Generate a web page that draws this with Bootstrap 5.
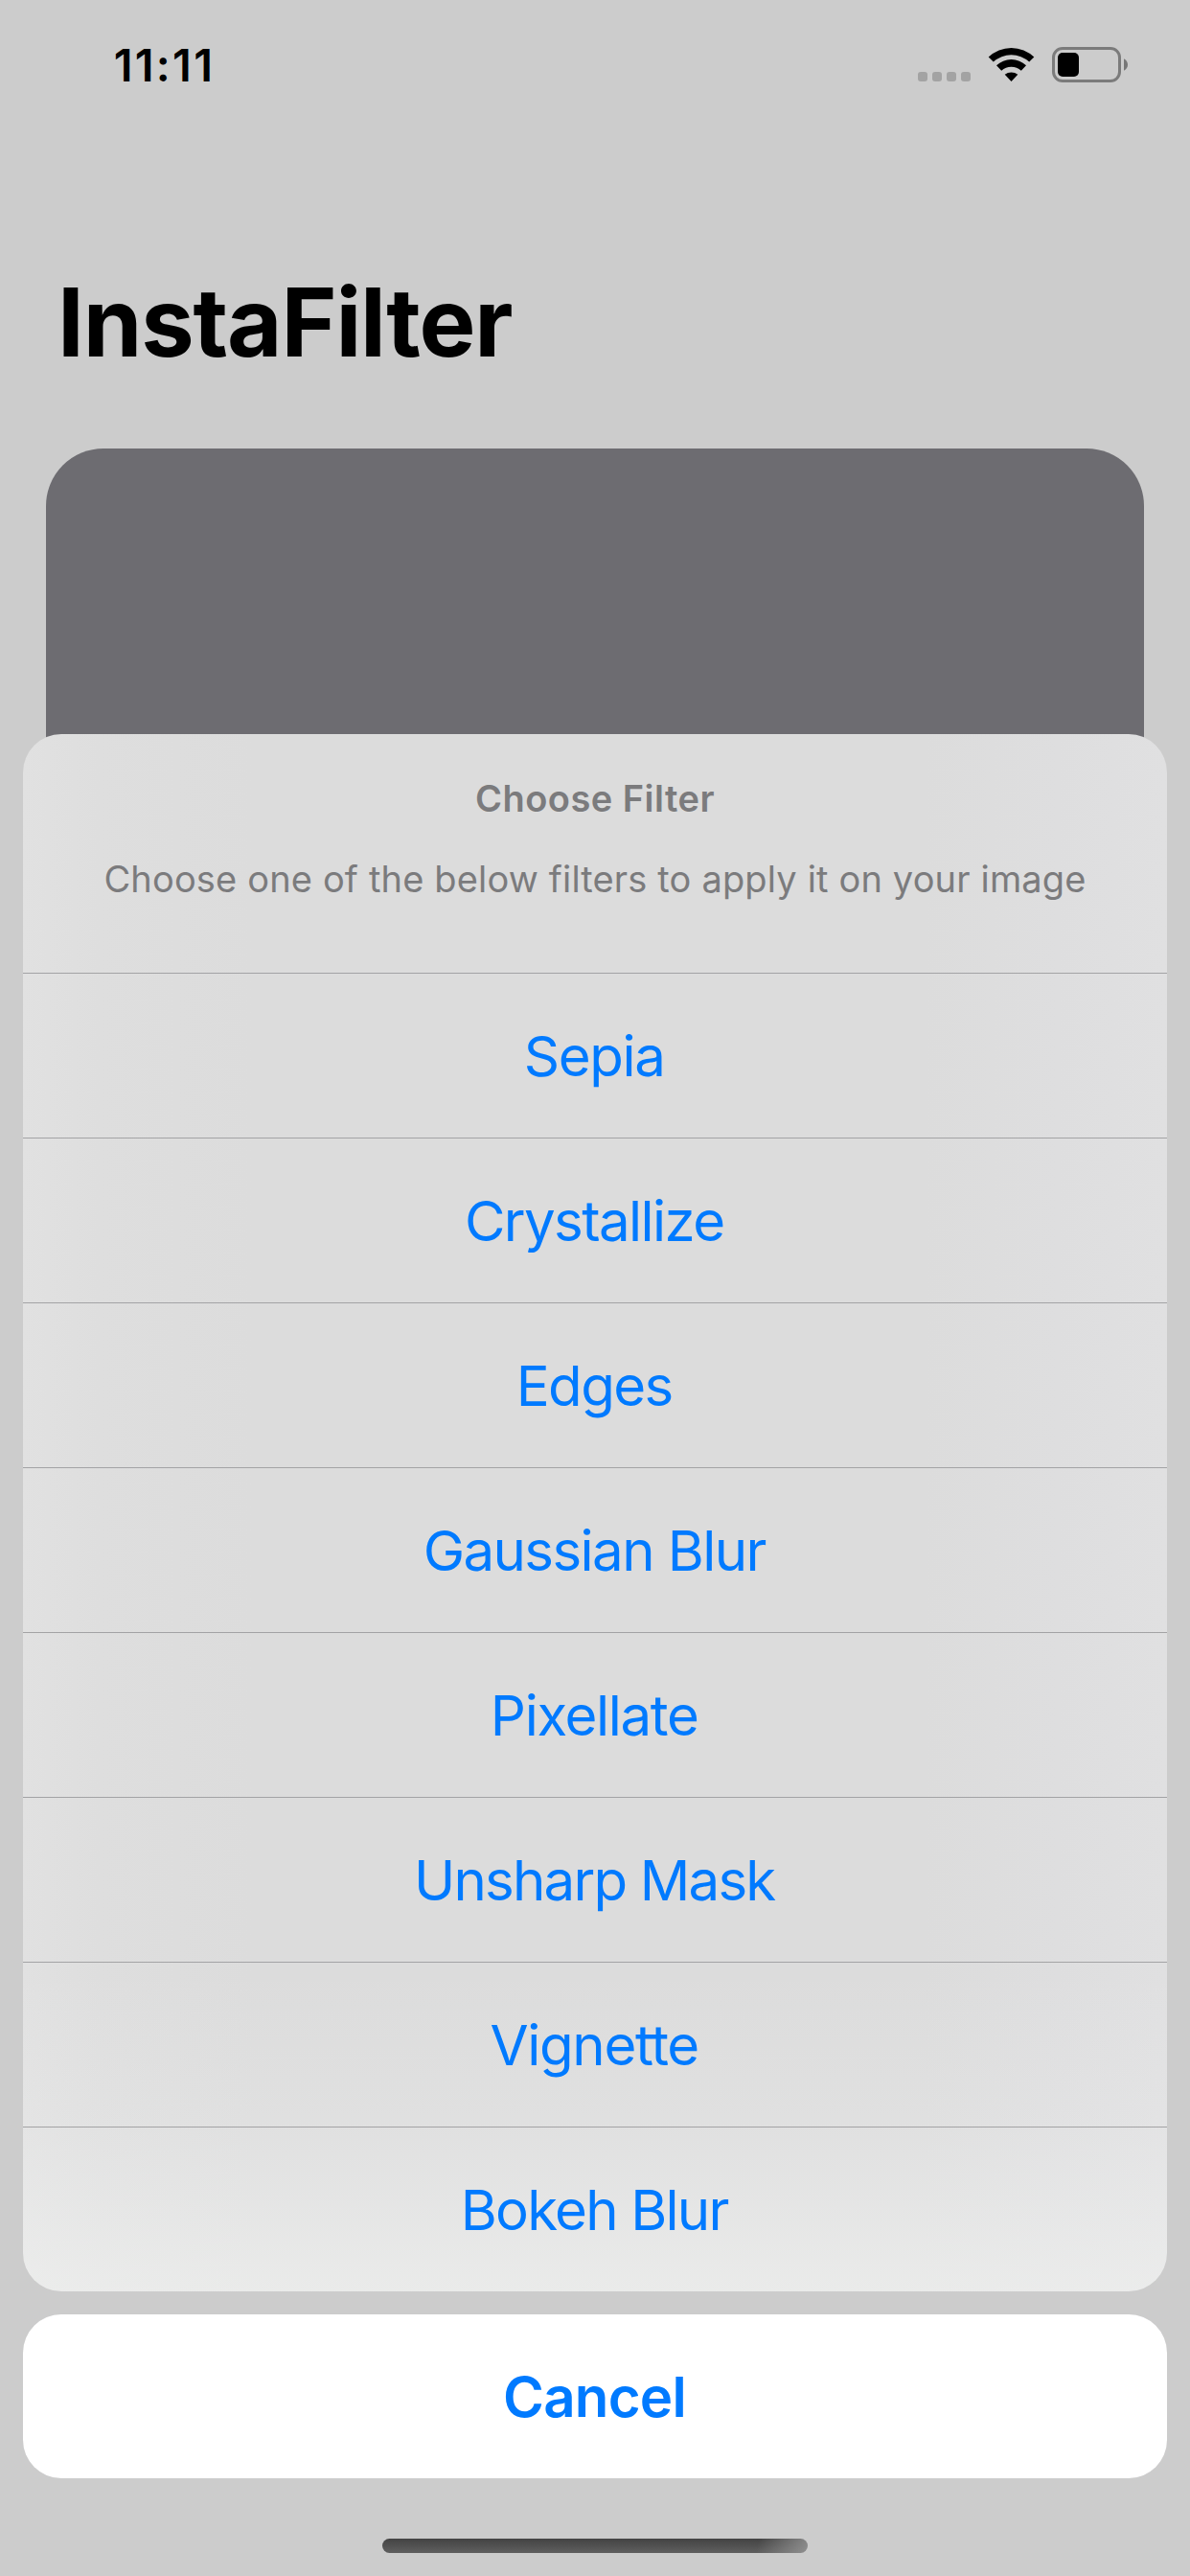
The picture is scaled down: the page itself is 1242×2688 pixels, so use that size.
<!DOCTYPE html>
<html lang="en">
<head>
<meta charset="utf-8">
<meta name="viewport" content="width=device-width, initial-scale=1">
<title>InstaFilter</title>
<link href="https://cdn.jsdelivr.net/npm/bootstrap@5.3.0/dist/css/bootstrap.min.css" rel="stylesheet">
<style>
  body { width: 1242px; height: 2688px; background: #ccc; color: #000; font-family: Inter, "Liberation Sans", sans-serif; }
  .status-bar { height: 134px; padding: 0 65px 0 118.7px; }
  .clock { font-size: 46.8px; line-height: 56px; font-weight: 600; margin-top: 40px; letter-spacing: 2.3px; }
  .status-icons { margin-top: 49px; height: 37px; }
  .page-title { font-size: 99px; line-height: 120px; font-weight: 700; letter-spacing: -1.13px; margin: 142px 0 0 60px; }
  .photo-area { margin: 72px 48px 0; height: 900px; border-radius: 60px; background: #6d6c71; }
  .action-sheet { padding: 0 24px; height: 1922px; }
  .sheet-group { border-radius: 40px; height: 1625px;
    background: linear-gradient(180deg, rgba(240,242,241,0) 1290px, rgba(240,241,241,.2) 1450px, rgba(240,241,240,.7) 1625px),
      linear-gradient(90deg, #e1e1e1 0, #dedede 80px, #dcdcdc 240px, #dcdcdc 940px, #dededf 1080px, #e0e0e1 1194px); }
  .sheet-head { height: 249px; gap: 38px; color: #7b7b7d; font-size: 38px; line-height: 46px; padding-top: 44px; white-space: nowrap; }
  .sheet-title { letter-spacing: .49px; }
  .sheet-message { letter-spacing: .16px; }
  .sheet-item { height: 172px; border: 0; border-top: 1px solid #a3a3a5; background: transparent; color: #007aff; font-size: 58.2px; line-height: 70px; letter-spacing: -1.6px; padding: 1px 1.6px 0 0; white-space: nowrap; }
  .item-loose { letter-spacing: -1.35px; }
  .item-tight { letter-spacing: -1.8px; }
  .sheet-cancel { height: 171px; margin-top: 24px; border: 0; border-radius: 40px; background: #fff; color: #007aff; font-size: 58.2px; line-height: 70px; font-weight: 600; letter-spacing: -.74px; padding: 0 1px 0 0; }
  .home-bar { width: 444px; height: 15px; margin-top: 63px; border-radius: 8px;
    background: linear-gradient(100deg, transparent 88%, rgba(160,160,160,.75) 100%), linear-gradient(#434343, #5f5f5f); }
</style>
</head>
<body class="position-relative overflow-hidden">
  <header class="status-bar d-flex justify-content-between align-items-start">
    <div class="clock">11:11</div>
    <svg class="status-icons" width="219" height="37" viewBox="0 0 219 37" aria-hidden="true">
      <g fill="#a3a3a3">
        <rect x="0" y="26" width="10" height="10" rx="3"/><rect x="15" y="26" width="10" height="10" rx="3"/>
        <rect x="30" y="26" width="10" height="10" rx="3"/><rect x="45" y="26" width="10" height="10" rx="3"/>
      </g>
      <g transform="translate(73 0)">
        <path d="M.7 10.6A34 34 0 0 1 48.3 10.6L43.2 15.6A27.5 27.5 0 0 0 5.8 15.6Z"/>
        <path d="M9 19.3A22.5 22.5 0 0 1 40 19.3L34.8 24.7A15.5 15.5 0 0 0 14.2 24.7Z"/>
        <path d="M17.7 28.8A11 11 0 0 1 31.3 28.8L24.5 36Z"/>
      </g>
      <rect x="141.5" y="1.5" width="69" height="34" rx="9.5" fill="none" stroke="#7b7b7b" stroke-width="3"/>
      <rect x="146" y="6" width="22" height="25" rx="5"/>
      <path d="M215 12.2Q219 14.5 219 18.500T215 24.800Z" fill="#777"/>
    </svg>
  </header>

  <h1 class="page-title mb-0">InstaFilter</h1>
  <div class="photo-area"></div>

  <div class="action-sheet position-absolute bottom-0 start-0 w-100 d-flex flex-column">
    <div class="sheet-group list-group overflow-hidden">
      <div class="sheet-head d-flex flex-column align-items-center">
        <div class="sheet-title fw-semibold">Choose Filter</div>
        <div class="sheet-message">Choose one of the below filters to apply it on your image</div>
      </div>
      <button class="sheet-item item-loose d-flex align-items-center justify-content-center">Sepia</button>
      <button class="sheet-item d-flex align-items-center justify-content-center">Crystallize</button>
      <button class="sheet-item d-flex align-items-center justify-content-center">Edges</button>
      <button class="sheet-item d-flex align-items-center justify-content-center">Gaussian Blur</button>
      <button class="sheet-item item-loose d-flex align-items-center justify-content-center">Pixellate</button>
      <button class="sheet-item item-tight d-flex align-items-center justify-content-center">Unsharp Mask</button>
      <button class="sheet-item item-loose d-flex align-items-center justify-content-center">Vignette</button>
      <button class="sheet-item item-tight d-flex align-items-center justify-content-center">Bokeh Blur</button>
    </div>
    <button class="sheet-cancel d-flex align-items-center justify-content-center">Cancel</button>
    <div class="home-bar align-self-center"></div>
  </div>
<script src="https://cdn.jsdelivr.net/npm/bootstrap@5.3.0/dist/js/bootstrap.bundle.min.js"></script>
</body>
</html>
